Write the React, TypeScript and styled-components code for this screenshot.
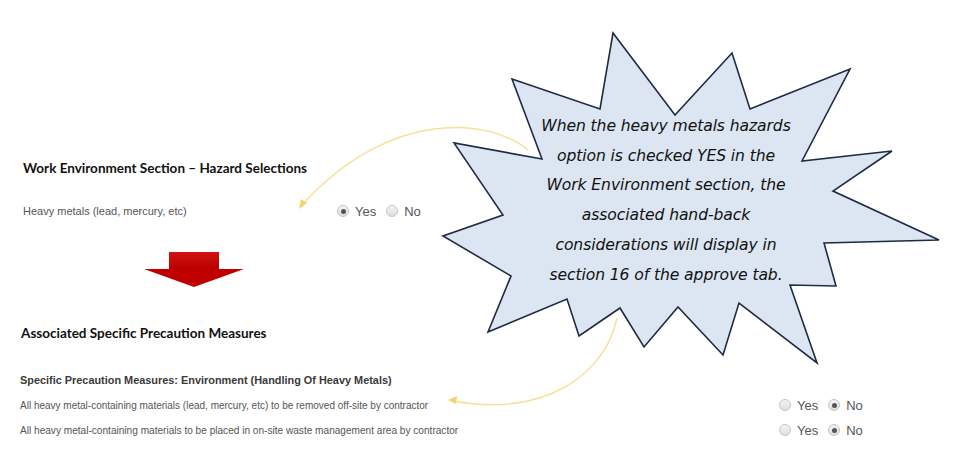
import React from "react";
import styled, { createGlobalStyle } from "styled-components";

const GlobalStyle = createGlobalStyle`
  html, body {
    margin: 0;
    padding: 0;
    background: #ffffff;
  }
`;

const Page = styled.div`
  position: relative;
  width: 960px;
  height: 453px;
  padding: 159px 0 0 20px;
  box-sizing: border-box;
  overflow: hidden;
  font-family: "Liberation Sans", Arial, sans-serif;
`;

const SectionTitle = styled.h2<{ $indent: number; $top: number }>`
  margin: ${(p) => p.$top}px 0 0 ${(p) => p.$indent}px;
  font-family: Lato, "Open Sans", sans-serif;
  font-weight: 700;
  font-size: 13.5px;
  line-height: 18px;
  color: #111;
`;

const SubTitle = styled.h3`
  margin: 30px 0 0 0;
  font-family: "Liberation Sans", Arial, sans-serif;
  font-weight: 700;
  font-size: 10.9px;
  line-height: 16px;
  color: #3a3a3a;
`;

const Row = styled.div<{ $labelWidth: number; $top: number; $indent: number }>`
  display: grid;
  grid-template-columns: ${(p) => p.$labelWidth}px auto;
  align-items: center;
  height: 18px;
  margin: ${(p) => p.$top}px 0 0 ${(p) => p.$indent}px;
`;

const Label = styled.span<{ $size: number }>`
  font-size: ${(p) => p.$size}px;
  color: #555;
  white-space: nowrap;
`;

const Options = styled.div`
  display: flex;
  align-items: center;
  gap: 10px;
`;

const Option = styled.label`
  display: flex;
  align-items: center;
  gap: 6px;
  font-size: 13px;
  color: #555;
`;

const Radio = styled.span<{ $checked: boolean }>`
  position: relative;
  width: 10px;
  height: 10px;
  border-radius: 50%;
  border: 1px solid #c4c4c4;
  background: linear-gradient(#f4f4f4, #dedede);
  &::after {
    content: "";
    display: ${(p) => (p.$checked ? "block" : "none")};
    position: absolute;
    left: 2.5px;
    top: 2.5px;
    width: 5px;
    height: 5px;
    border-radius: 50%;
    background: #555;
  }
`;

const RedArrow = styled.div`
  margin: 32px 0 0 123px;
  width: 101px;
  height: 35px;
  display: flex;
  flex-direction: column;
  align-items: center;
`;

const ArrowShaft = styled.div`
  width: 50px;
  height: 17px;
  background: linear-gradient(#d31212, #b80000);
`;

const ArrowHead = styled.div`
  width: 0;
  height: 0;
  border-left: 50.5px solid transparent;
  border-right: 50.5px solid transparent;
  border-top: 18px solid #c00000;
`;

const Overlay = styled.svg`
  position: absolute;
  left: 0;
  top: 0;
  width: 960px;
  height: 453px;
  pointer-events: none;
`;

const CalloutText = styled.div`
  position: absolute;
  left: 506px;
  top: 112px;
  width: 320px;
  text-align: center;
  font-family: "DejaVu Sans", cursive;
  font-style: italic;
  font-size: 15.6px;
  line-height: 29.7px;
  color: #111;
  letter-spacing: -0.1px;
`;

type Choice = "yes" | "no";

function YesNo({ value }: { value: Choice }) {
  return (
    <Options>
      <Option>
        <Radio $checked={value === "yes"} />
        Yes
      </Option>
      <Option>
        <Radio $checked={value === "no"} />
        No
      </Option>
    </Options>
  );
}

const starPoints = [
  [512, 79], [600, 109], [613, 33], [675, 115], [732, 53], [750, 109],
  [850, 69], [802, 161], [892, 151], [833, 191], [939, 240], [824, 243],
  [836, 286], [790, 285], [817, 363], [739, 303], [723, 355], [678, 307],
  [644, 347], [620, 308], [579, 336], [567, 299], [488, 332], [511, 276],
  [443, 236], [503, 215], [454, 143], [542, 159],
]
  .map((p) => p.join(","))
  .join(" ");

const calloutLines = [
  "When the heavy metals hazards",
  "option is checked YES in the",
  "Work Environment section, the",
  "associated hand-back",
  "considerations will display in",
  "section 16 of the approve tab.",
];

export default function App() {
  return (
    <>
      <GlobalStyle />
      <Page>
        <SectionTitle $indent={3} $top={0}>
          Work Environment Section – Hazard Selections
        </SectionTitle>
        <Row $labelWidth={314} $top={25} $indent={3}>
          <Label $size={11}>Heavy metals (lead, mercury, etc)</Label>
          <YesNo value="yes" />
        </Row>

        <RedArrow>
          <ArrowShaft />
          <ArrowHead />
        </RedArrow>

        <SectionTitle $indent={1} $top={37}>
          Associated Specific Precaution Measures
        </SectionTitle>
        <SubTitle>Specific Precaution Measures: Environment (Handling Of Heavy Metals)</SubTitle>
        <Row $labelWidth={759} $top={8} $indent={0}>
          <Label $size={10}>
            All heavy metal-containing materials (lead, mercury, etc) to be removed off-site by contractor
          </Label>
          <YesNo value="no" />
        </Row>
        <Row $labelWidth={759} $top={7} $indent={0}>
          <Label $size={10.1}>
            All heavy metal-containing materials to be placed in on-site waste management area by contractor
          </Label>
          <YesNo value="no" />
        </Row>

        <Overlay viewBox="0 0 960 453">
          <g fill="none" stroke="#f7df97" strokeWidth="1.4">
            <path d="M528 150 C 490 118 390 108 303 204" />
            <path d="M617 318 C 606 372 548 418 453 401" />
          </g>
          <g fill="#f5d36a">
            <polygon points="299,209 301,199 307,203" />
            <polygon points="448,400 457,396 456,404" />
          </g>
          <polygon
            points={starPoints}
            fill="#dce6f2"
            stroke="#1f2b45"
            strokeWidth="1.6"
            strokeLinejoin="miter"
          />
        </Overlay>
        <CalloutText>
          {calloutLines.map((l) => (
            <div key={l}>{l}</div>
          ))}
        </CalloutText>
      </Page>
    </>
  );
}
